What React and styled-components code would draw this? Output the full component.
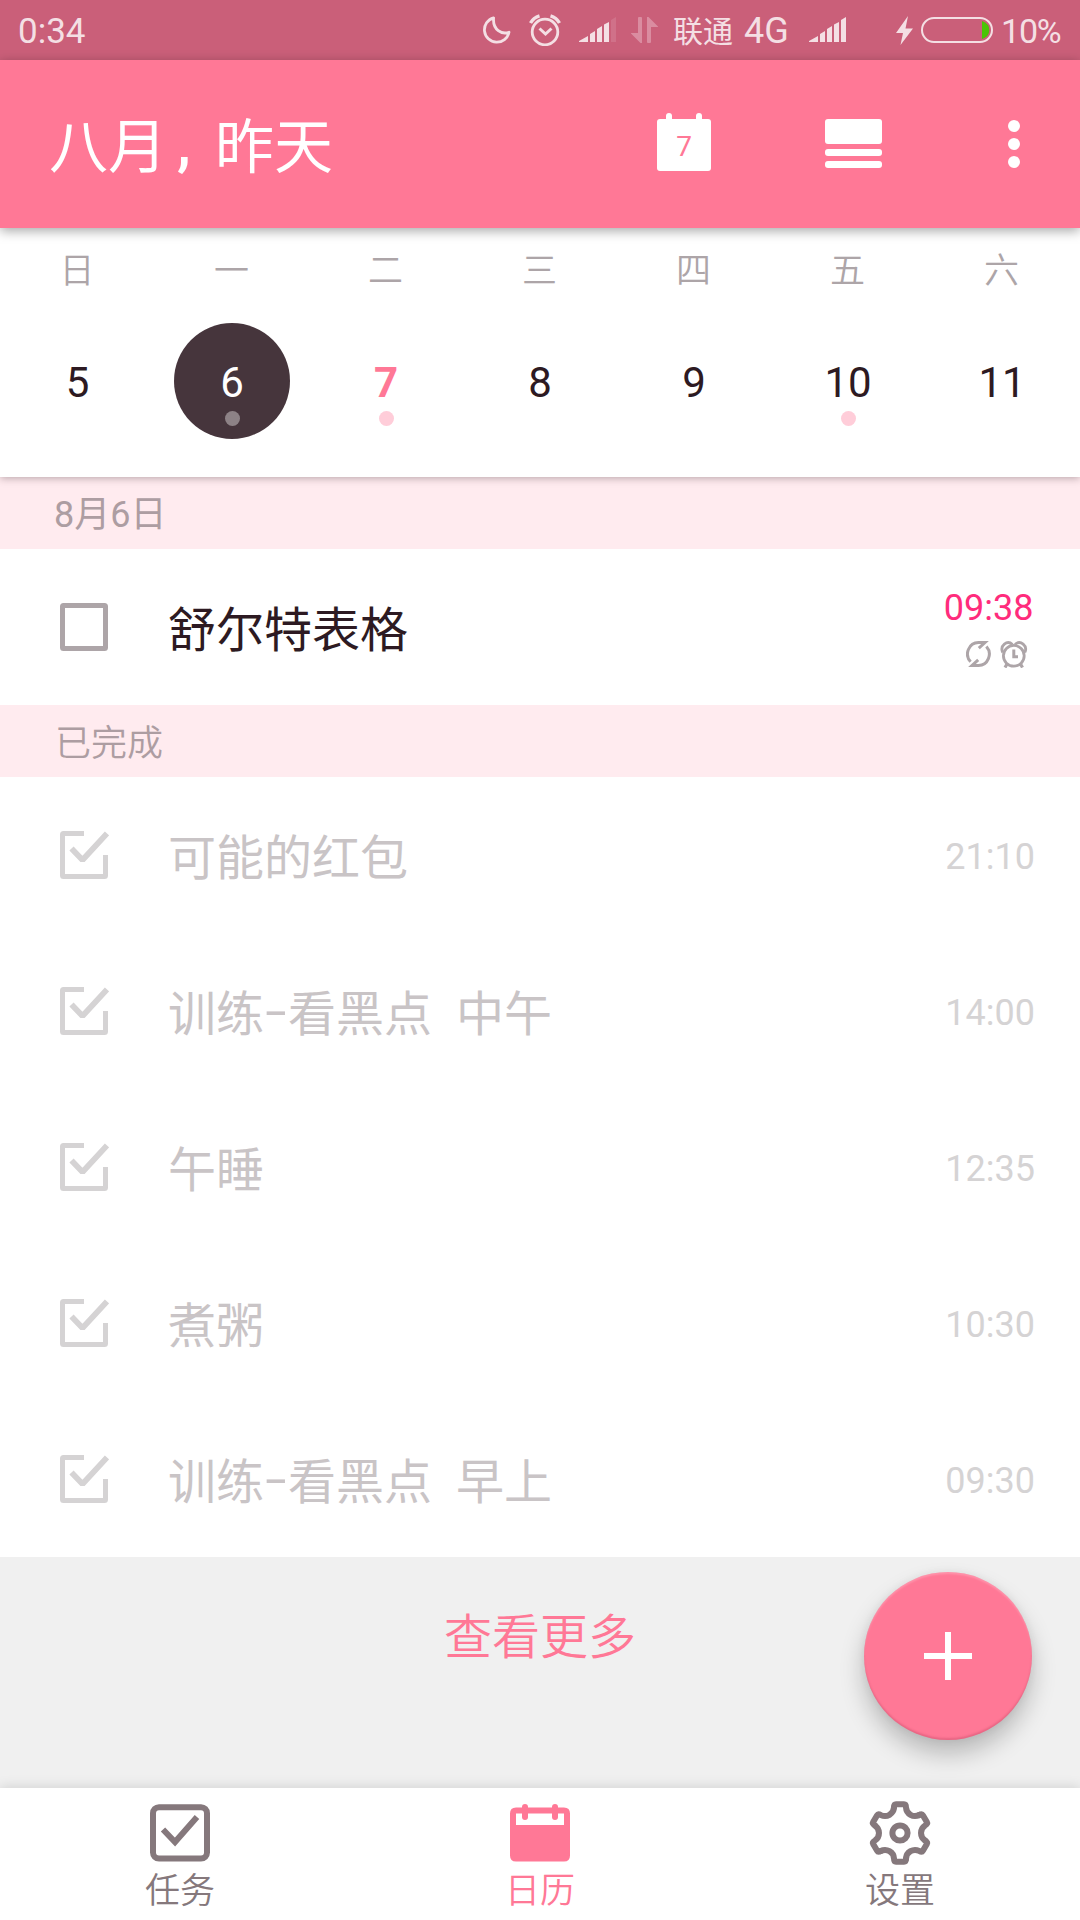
import React from 'react'
import styled, { createGlobalStyle } from 'styled-components';

const GlobalStyle = createGlobalStyle`
    * {
        box-sizing : border-box;
    }

    body {
        margin : 0;
        background-color : white;
        font-family : Roboto, 'Noto Sans CJK SC', sans-serif;
        font-weight : 400;
    }
`;

const Screen = styled.div`
    width : 1080px;
    height : 1920px;
    display : flex;
    flex-direction : column;
    overflow : hidden;
`;

const StatusBar = styled.div`
    height : 60px;
    display : flex;
    align-items : center;
    padding : 3px 21px 0 18px;
    background-color : #ca5f79;
    color : #f4dfe4;
    font-size : 35px;
    line-height : 60px;
    white-space : nowrap;

    svg {
        display : block;
        margin-top : -3px;
        flex-shrink : 0;
    }
`;

const StatusIcons = styled.div`
    display : flex;
    align-items : center;
    margin-left : auto;
`;

const Carrier = styled.span`
    width : 62px;
    margin-left : 15px;
    font-size : 30px;
`;

const Network = styled.span`
    width : 47px;
    margin-left : 9px;
    margin-top : -1px;
    font-size : 36px;
`;

const Battery = styled.span`
    width : 58px;
    margin-left : 8px;
    margin-top : -2px;
    font-size : 34px;
    letter-spacing : -1.2px;
`;

const Gap = styled.span`
    width : ${p => p.$w}px;
`;

const Header = styled.header`
    height : 168px;
    display : flex;
    align-items : center;
    padding : 0 60px 0 49px;
    background-color : #ff7896;
    box-shadow : 0 3px 11px rgba(0, 0, 0, 0.35);
    z-index : 2;
`;

const Title = styled.h1`
    margin : 0;
    padding-top : 8px;
    flex-grow : 1;
    display : flex;
    color : white;
    font-size : 59px;
    font-weight : 400;
    line-height : 84px;
    white-space : pre;
`;

const Comma = styled.span`
    width : 48px;
    padding-left : 10px;
    font-weight : 600;
    margin-top : -4px;
`;

const HeaderActions = styled.div`
    display : flex;
    align-items : center;
`;

const TodayIcon = styled.div`
    width : 54px;
    height : 58px;
    margin-right : 114px;
    margin-top : -4px;
    position : relative;

    svg {
        display : block;
    }

    span {
        position : absolute;
        left : 0;
        top : 17px;
        width : 100%;
        text-align : center;
        color : #ff7896;
        font-size : 28px;
        line-height : 34px;
    }
`;

const Week = styled.div`
    height : 249px;
    display : grid;
    grid-template-columns : 155px repeat(6, 154px);
    background-color : white;
    box-shadow : 0 1px 8px rgba(70, 50, 58, 0.4);
    z-index : 1;
`;

const Day = styled.div`
    display : flex;
    flex-direction : column;
    align-items : center;
`;

const WeekdayName = styled.span`
    margin-top : 22px;
    height : 44px;
    margin-right : 1px;
    color : #ada5a8;
    font-size : 35px;
    font-weight : 350;
    line-height : 44px;
`;

const DayNumber = styled.div`
    width : 116px;
    height : 116px;
    margin-top : 29px;
    border-radius : 50%;
    display : flex;
    flex-direction : column;
    align-items : center;
    background-color : ${p => p.$selected ? '#46353c' : 'transparent'};
    color : ${p => p.$selected ? 'white' : p.$today ? '#ff7896' : '#2d1a22'};
    font-size : 42px;
    font-weight : ${p => p.$today ? 700 : 400};
    line-height : 50px;
    padding-top : 35px;
`;

const Dot = styled.span`
    width : 15px;
    height : 15px;
    margin-top : 3px;
    border-radius : 50%;
    background-color : ${p => p.$selected ? '#8d8286' : '#ffcdd9'};
`;

const SectionTitle = styled.div`
    height : 72px;
    padding-left : ${p => p.$left || 55}px;
    background-color : #ffebef;
    color : #ad9da2;
    font-size : 36px;
    font-weight : ${p => p.$left ? 400 : 350};
    line-height : ${p => p.$left ? 77 : 79}px;
`;

const TaskRow = styled.div`
    height : 156px;
    display : flex;
    align-items : center;
    padding : 0 45px 0 60px;
    background-color : white;
`;

const TaskName = styled.div`
    flex-grow : 1;
    margin-left : 59px;
    padding-top : 8px;
    color : ${p => p.$done ? '#c9c4c6' : '#2d1a22'};
    font-size : 48px;
    line-height : 60px;
    white-space : nowrap;
`;

const Hyphen = styled.span`
    display : inline-block;
    width : 24px;
    text-align : center;
    transform : translateY(-3px) scaleX(1.6);
`;

const Space = styled.span`
    display : inline-block;
    width : 24px;
    white-space : pre;
`;

const TaskInfo = styled.div`
    display : flex;
    flex-direction : column;
    align-items : flex-end;
`;

const Time = styled.span`
    color : ${p => p.$done ? '#d5d3d4' : '#ff2c7c'};
    padding-top : ${p => p.$done ? 3 : 0}px;
    margin-right : ${p => p.$done ? 0 : 1.5}px;
    font-size : 36px;
    line-height : 42px;
`;

const TaskMarks = styled.div`
    display : flex;
    gap : 9px;
    margin : 12px 7px 0 0;
`;

const More = styled.div`
    height : 231px;
    position : relative;
    background-color : #f0f0f0;
    color : #ff7896;
    font-size : 48px;
    font-weight : 350;
    line-height : 60px;
    text-align : center;
    padding-top : 51px;
`;

const AddButton = styled.button`
    position : absolute;
    right : 48px;
    top : 15px;
    width : 168px;
    height : 168px;
    padding : 0;
    border : none;
    border-radius : 50%;
    display : flex;
    align-items : center;
    justify-content : center;
    background-color : #ff7896;
    box-shadow : 0 14px 24px rgba(0, 0, 0, 0.23), 0 0 8px rgba(0, 0, 0, 0.06), inset 0 -2px 2px rgba(180, 60, 90, 0.3), inset 0 2px 2px rgba(255, 255, 255, 0.2);
`;

const BottomNav = styled.nav`
    height : 132px;
    display : grid;
    grid-template-columns : repeat(3, 1fr);
    background-color : white;
    box-shadow : 0 -1px 12px rgba(0, 0, 0, 0.13);
    z-index : 1;
`;

const NavItem = styled.div`
    display : flex;
    flex-direction : column;
    align-items : center;
    padding-top : 12px;
    color : ${p => p.$active ? '#ff7896' : '#85787c'};
    font-size : 35px;
    font-weight : 350;
    line-height : 44px;

    svg {
        display : block;
        margin-bottom : 4px;
    }
`;

function Moon() {
    return (
        <svg width="28" height="28" viewBox="0 0 28 28" fill="none" stroke="currentColor" strokeWidth="2.8" strokeLinejoin="round">
            <path d="M10.6 1.8 A12.4 12.4 0 1 0 26 16.2 C19 18.8 9.5 14 10.6 1.8 Z" />
        </svg>
    )
}

function AlarmStatus() {
    return (
        <svg width="32" height="32" viewBox="0 0 32 32" fill="none" stroke="currentColor" strokeWidth="2.8">
            <circle cx="16" cy="18" r="12.8" />
            <path d="M10.5 14.5 L16.5 20 L22.5 14.5" strokeWidth="3" />
            <path d="M1.5 9 Q4.5 3.5 10.5 1.8 M21.5 1.8 Q27.5 3.5 30.5 9" strokeWidth="3.4" />
        </svg>
    )
}

function Signal({ last = 1 }) {
    return (
        <svg width="37" height="26" viewBox="0 0 37 26" fill="currentColor">
            <path d="M0 24 L9 19 V25 H0 Z M11 17 L16 14 V25 H11 Z M18 12 L23 9 V25 H18 Z M25 7.5 L30 5 V25 H25 Z" />
            <path d="M32 3 L37 0 V25 H32 Z" opacity={last} />
        </svg>
    )
}

function DataArrows() {
    return (
        <svg width="27" height="26" viewBox="0 0 27 26" fill="#da8ca0">
            <path d="M7 1 Q7 0 8 0 H10 Q11 0 11 1 V26 H9.5 L0 16.5 V16 H7 Z" />
            <path d="M20 25 Q20 26 19 26 H17 Q16 26 16 25 V0 H17.5 L27 9.5 V10 H20 Z" />
        </svg>
    )
}

function Bolt() {
    return (
        <svg width="17" height="29" viewBox="0 0 17 29" fill="currentColor">
            <path d="M12 0 L0 17 H7 L4.5 29 L17 12.5 H9.5 Z" />
        </svg>
    )
}

function BatteryIcon() {
    return (
        <svg width="72" height="26" viewBox="0 0 72 26" fill="none">
            <rect x="1" y="1" width="70" height="24" rx="12" stroke="currentColor" strokeWidth="2" />
            <path d="M61 4 Q68.3 6.5 68.3 13 Q68.3 19.5 61 22 Z" fill="#4ac404" />
        </svg>
    )
}

function Checkbox() {
    return (
        <svg width="49" height="48" viewBox="0 0 49 48" fill="none">
            <rect x="2.5" y="2.5" width="43" height="43" rx="1" stroke="#ada5a8" strokeWidth="5" />
        </svg>
    )
}

function CheckboxDone() {
    return (
        <svg width="49" height="48" viewBox="0 0 49 48" fill="none" stroke="#d5d3d4">
            <path d="M24 2.5 H3.5 Q2.5 2.5 2.5 3.5 V44.5 Q2.5 45.5 3.5 45.5 H44.5 Q45.5 45.5 45.5 44.5 V24" strokeWidth="5" />
            <path d="M11.5 17.5 L22.5 29 L47 2.5" strokeWidth="5.8" strokeLinejoin="bevel" />
        </svg>
    )
}

function Repeat() {
    return (
        <svg width="25" height="26" viewBox="0 0 25 26" fill="none" stroke="#ada5a8" strokeWidth="3">
            <path d="M4.6 20.8 A11 11.4 0 0 1 12.5 1.5 H19 L12.8 7.2" />
            <path d="M20.4 5.4 A11 11.4 0 0 1 12.5 24.5 H6 L12.2 18.8" />
        </svg>
    )
}

function AlarmMark() {
    return (
        <svg width="28" height="27" viewBox="0 0 28 27" fill="none" stroke="#ada5a8" strokeWidth="2.8">
            <circle cx="13.8" cy="14.8" r="10.4" />
            <path d="M2.8 11.5 C-0.5 5 7 -1.5 12.5 3.5 M24.8 11.5 C28 5 20.5 -1.5 15 3.5" />
            <path d="M13.8 8.5 V15.7 H18" strokeWidth="3" />
            <path d="M7 23 L5 26.5 M20.5 23 L22.5 26.5" strokeWidth="3.2" />
        </svg>
    )
}

function TasksIcon() {
    return (
        <svg width="66" height="66" viewBox="0 0 66 66" fill="none" stroke="currentColor">
            <rect x="6" y="7.2" width="54" height="51.4" rx="6" strokeWidth="6" />
            <path d="M16 29.5 L28 42 L50 17" strokeWidth="6" />
        </svg>
    )
}

function CalendarIcon() {
    return (
        <svg width="66" height="66" viewBox="0 0 66 66" fill="currentColor">
            <path fillRule="evenodd" d="M9 7.5 H57 Q63 7.5 63 13.5 V55.6 Q63 61.6 57 61.6 H9 Q3 61.6 3 55.6 V13.5 Q3 7.5 9 7.5 Z M9 13.5 V25 H57 V13.5 Z" />
            <rect x="15" y="4" width="6" height="16" rx="3" />
            <rect x="45" y="4" width="6" height="16" rx="3" />
        </svg>
    )
}

function GearIcon() {
    return (
        <svg width="66" height="66" viewBox="-33 -33 66 66" fill="none" stroke="currentColor" strokeWidth="6" strokeLinecap="round">
            {[0, 60, 120, 180, 240, 300].map(deg => (
                <path key={deg} transform={`rotate(${deg})`} d="M-6 -25.5 Q-6 -28.7 -4 -28.7 H4 Q6 -28.7 6 -25.5 A9 9 0 0 0 19.1 -18" />
            ))}
            <circle r="7.6" />
        </svg>
    )
}

const days = [
    { name: '日', date: 5 },
    { name: '一', date: 6, selected: true, dot: true },
    { name: '二', date: 7, today: true, dot: true },
    { name: '三', date: 8 },
    { name: '四', date: 9 },
    { name: '五', date: 10, dot: true },
    { name: '六', date: 11 },
]

const doneTasks = [
    { name: '可能的红包', time: '21:10' },
    { name: <>训练<Hyphen>-</Hyphen>看黑点<Space> </Space>中午</>, time: '14:00' },
    { name: '午睡', time: '12:35' },
    { name: '煮粥', time: '10:30' },
    { name: <>训练<Hyphen>-</Hyphen>看黑点<Space> </Space>早上</>, time: '09:30' },
]

function App() {
  return (
    <>
        <GlobalStyle />
        <Screen>
            <StatusBar>
                <span>0:34</span>
                <StatusIcons>
                    <Moon />
                    <Gap $w={18} />
                    <AlarmStatus />
                    <Gap $w={18} />
                    <Signal last={0.15} />
                    <Gap $w={15} />
                    <DataArrows />
                    <Carrier>联通</Carrier>
                    <Network>4G</Network>
                    <Gap $w={18} />
                    <Signal />
                    <Gap $w={50} />
                    <Bolt />
                    <Gap $w={8} />
                    <BatteryIcon />
                    <Battery>10%</Battery>
                </StatusIcons>
            </StatusBar>

            <Header>
                <Title>八月<Comma>,</Comma>昨天</Title>
                <HeaderActions>
                    <TodayIcon>
                        <svg width="54" height="58" viewBox="0 0 54 58" fill="white">
                            <rect x="0" y="6" width="54" height="52" rx="3" />
                            <rect x="9" y="0" width="6" height="12" rx="3" />
                            <rect x="39" y="0" width="6" height="12" rx="3" />
                        </svg>
                        <span>7</span>
                    </TodayIcon>
                    <svg width="57" height="50" viewBox="0 0 57 50" fill="white">
                        <rect x="0" y="0" width="57" height="25" rx="3" />
                        <rect x="0" y="30" width="57" height="7" rx="3" />
                        <rect x="0" y="42" width="57" height="7" rx="3" />
                    </svg>
                    <Gap $w={126} />
                    <svg width="12" height="48" viewBox="0 0 12 48" fill="white">
                        <circle cx="6" cy="6" r="6" />
                        <circle cx="6" cy="24" r="6" />
                        <circle cx="6" cy="42" r="6" />
                    </svg>
                </HeaderActions>
            </Header>

            <Week>
                {days.map(day => (
                    <Day key={day.date}>
                        <WeekdayName>{day.name}</WeekdayName>
                        <DayNumber $selected={day.selected} $today={day.today}>
                            {day.date}
                            {day.dot && <Dot $selected={day.selected} />}
                        </DayNumber>
                    </Day>
                ))}
            </Week>

            <SectionTitle $left={54}>8月6日</SectionTitle>
            <TaskRow>
                <Checkbox />
                <TaskName>舒尔特表格</TaskName>
                <TaskInfo>
                    <Time>09:38</Time>
                    <TaskMarks>
                        <Repeat />
                        <AlarmMark />
                    </TaskMarks>
                </TaskInfo>
            </TaskRow>

            <SectionTitle>已完成</SectionTitle>
            {doneTasks.map(task => (
                <TaskRow key={task.time}>
                    <CheckboxDone />
                    <TaskName $done>{task.name}</TaskName>
                    <Time $done>{task.time}</Time>
                </TaskRow>
            ))}

            <More>
                查看更多
                <AddButton>
                    <svg width="48" height="48" viewBox="0 0 48 48" fill="none" stroke="white" strokeWidth="6">
                        <path d="M24 0 V48 M0 24 H48" />
                    </svg>
                </AddButton>
            </More>

            <BottomNav>
                <NavItem>
                    <TasksIcon />
                    任务
                </NavItem>
                <NavItem $active>
                    <CalendarIcon />
                    日历
                </NavItem>
                <NavItem>
                    <GearIcon />
                    设置
                </NavItem>
            </BottomNav>
        </Screen>
    </>
  )
}

export default App
